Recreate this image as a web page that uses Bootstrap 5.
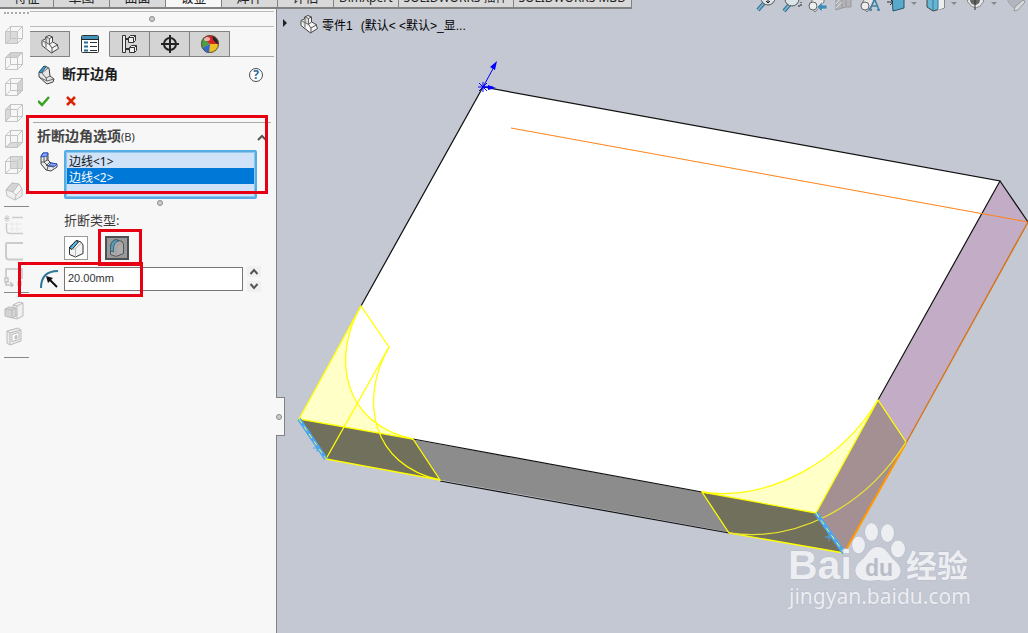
<!DOCTYPE html>
<html lang="zh-CN">
<head>
<meta charset="utf-8">
<meta name="viewport" content="width=device-width, initial-scale=1">
<title>SOLIDWORKS - 断开边角</title>
<link rel="stylesheet" href="https://cdn.jsdelivr.net/npm/bootstrap@5.3.0/dist/css/bootstrap.min.css">
<style>
:root{--panel:#f7f7f7;--view:#c4c8d3;--edge:#828282;--rule:#a8a8a8;--mark:#e60012}
body{font-family:"Noto Sans","Noto Sans CJK SC",sans-serif;font-size:13px;line-height:16px;color:#3c3c3c;background:var(--view)}
button{font:inherit}
svg{display:block;flex:none}
.ribbon{height:9px}
.ribbon-tab{height:24px;width:56px;line-height:18px;padding:2px 0 0;border:0;border-right:1px solid var(--edge);border-bottom:2px solid var(--edge);background:#d9d9d9;color:#222;white-space:nowrap}
.ribbon-tab:first-child{width:54px}
.ribbon-tab.active{background:var(--panel)}
.ribbon-tab.wide{width:auto;padding:4px 5px 0;font-size:12px}
.side{width:30px;background:var(--panel)}
.side button,.plain{border:0;background:none;padding:0}
.side-grip{width:25px;border-top:2px dotted #aaa;margin-top:3px;margin-bottom:11px}
.side-rule{width:25px;border-top:1px solid #888;margin-top:5px;margin-bottom:8px}
.side-rule:last-child{margin-top:10px}
.side-tools{gap:6px}
.panel{width:246px;background:var(--panel)}
.grip{height:16px;margin-top:2px;border-top:1px solid #bbb;border-bottom:1px solid #bbb;margin-right:2px}
.knob{width:6px;height:6px;border:1px solid #8b8b8b;border-radius:50%;background:#ccc}
.tabs{margin:4px 2px 0 0;border-bottom:1px solid var(--rule)}
.tabs button{width:40px;height:26px;margin-bottom:-1px;border:1px solid var(--edge);border-left-width:0;background:#d4d4d4;padding:0}
.tabs button.active{background:var(--panel);border-bottom-color:var(--panel);border-top-color:var(--panel)}
.head{font-size:14px;line-height:18px;color:#1d1d1d;margin-left:6px;padding-bottom:2px}
.confirm{gap:16px;margin-top:10px}
.group{margin:15px 5px 0 3px;border-top:1px solid var(--rule)}
.group h2{font-size:14px;line-height:18px;padding-bottom:2px;color:#444}
.group h2 small{font-size:11px;font-weight:400;color:#333}
.picked{margin-top:2px;padding-left:7px}
.edges{width:193px;height:49px;border:2px solid #56ade4;padding:0 1px 1px;background:#cfe2f7;color:#111;font-size:12px;overflow:hidden;outline:1px solid #8dc7ee;outline-offset:-3px;scrollbar-width:none}
.edges::-webkit-scrollbar{display:none}
.edges option{height:16px;min-height:16px;line-height:13px;padding:0 2px}
.edges option:checked{background:#0078d7 linear-gradient(#0078d7,#0078d7);color:#fff !important}
.splitter{padding:1px 0 0 15px}
.type{padding:6px 0 0 34px}
.kinds{gap:17px;margin-top:8px}
.kind{width:24px;height:24px;border:1px solid #999;background:#fff;padding:1px}
.kind.active{background:#999;border:2px solid #4b5055;padding:0}
.size-row{gap:4px;margin-top:6px}
.radius{width:179px;height:24px;border:1px solid #767676;border-radius:0;padding:0 3px 3px;font:11px "Liberation Sans",sans-serif;color:#333}
.spin button{width:14px;height:11px;background:#f0f0f0}
.handle{left:-1px;top:388px;width:9px;height:39px;border:1px solid var(--edge);border-left:0;background:var(--panel)}
.stage{border-left:1px solid var(--edge);min-width:0}
.tree{font-family:"Liberation Sans","Noto Sans CJK SC",sans-serif;font-size:12px;color:#000;padding:5px 0 0 6px}
.tree-icon{margin-left:10px;margin-right:3px}
.hud{right:2px;top:-18px}
.hud button{width:26px}
.hud .has-menu{width:40px}
.hud button:last-child{width:20px}
.callout-box{border:3px solid var(--mark);pointer-events:none}
.box-edges{left:26px;top:115px;width:242px;height:79px}
.box-kind{left:98px;top:229px;width:44px;height:37px}
.box-radius{left:18px;top:262px;width:125px;height:35px}
.wm{fill:#eceef2;paint-order:stroke;stroke:#b6bbc7;stroke-width:1}
</style>
<script src="https://cdn.jsdelivr.net/npm/bootstrap@5.3.0/dist/js/bootstrap.bundle.min.js"></script>
</head>
<body class="position-relative vh-100 overflow-hidden d-flex flex-column">
<svg width="0" height="0" class="position-absolute" aria-hidden="true">
  <defs>
    <g id="cube" fill="none" stroke="#c4c4c4"><path d="M1.500 6.500h12v12h-12zM6.500 1.500h12v12h-12zM1.500 6.500l5-5M13.500 6.500l5-5M13.500 18.500l5-5M1.500 18.500l5-5"/></g>
    <g id="part" stroke-linejoin="round"><path d="M1 5.500 4.500 4V2L8 .500l3.500 1.500v5l2 1L16 9.500l1.500 4-7 4.500L1 10.500z" fill="#f4f4f4" stroke="#444"/><path d="m5 2 3.500 1.500v6L5 7.500zM1 5.500l4 2v5" fill="#dcdcdc" stroke="#666"/><path d="m8.500 3.500 3-1.500M8.500 9.500l3-2.500M8.500 9.500 11 13v5m0-5 6-3.500" fill="none" stroke="#555"/></g>
  </defs>
</svg>

<nav class="ribbon d-flex align-items-end overflow-hidden flex-shrink-0" aria-label="命令选项卡">
  <button class="ribbon-tab">特征</button><button class="ribbon-tab">草图</button><button class="ribbon-tab">曲面</button><button class="ribbon-tab active">钣金</button><button class="ribbon-tab">焊件</button><button class="ribbon-tab">评估</button><button class="ribbon-tab wide">DimXpert</button><button class="ribbon-tab wide">SOLIDWORKS 插件</button><button class="ribbon-tab wide">SOLIDWORKS MBD</button>
</nav>

<main class="d-flex flex-grow-1">
  <aside class="side d-flex flex-column align-items-start flex-shrink-0" aria-label="视图工具">
    <div class="side-grip ms-1"></div>
    <div class="side-tools d-flex flex-column ms-1">
      <button aria-label="前视"><svg width="20" height="20"><path d="M1.500 6.500h12v12h-12z" fill="#dadada"/><use href="#cube"/></svg></button>
      <button aria-label="上视"><svg width="20" height="20"><path d="m1.500 6.500 5-5h12l-5 5z" fill="#d2d2d2"/><use href="#cube"/></svg></button>
      <button aria-label="右视"><svg width="20" height="20"><path d="m13.500 6.500 5-5v12l-5 5z" fill="#d2d2d2"/><use href="#cube"/></svg></button>
      <button aria-label="左视"><svg width="20" height="20"><path d="m1.500 6.500 5-5v12l-5 5z" fill="#dadada"/><use href="#cube"/></svg></button>
      <button aria-label="下视"><svg width="20" height="20"><path d="m1.500 18.500 5-5h12l-5 5z" fill="#dadada"/><use href="#cube"/></svg></button>
      <button aria-label="后视"><svg width="20" height="20"><path d="M6.500 1.500h12v12h-12z" fill="#dadada"/><use href="#cube"/></svg></button>
      <button aria-label="等轴测"><svg width="20" height="20" stroke="#c0c0c0" stroke-linejoin="round"><path d="m2 9 6-7 7 1 3 5v7l-7 4-8-4z" fill="#efefef"/><path d="m2 9 6-7 7 1-6 8z" fill="#d5d5d5"/><path d="m9 11 6-8 3 5-6 6z" fill="#f5f5f5"/><path d="m9 11 3 3-1 5" fill="none"/></svg></button>
    </div>
    <div class="side-rule ms-1"></div>
    <div class="side-tools d-flex flex-column ms-1">
      <button aria-label="草图圆角"><svg width="20" height="20" fill="none" stroke="#ccc"><path d="M8 2.500h11M2.500 8v7q0 3.500 4 3.500H19" stroke-width="1.500"/><path d="M3 0v7M0 3.500h6M1 1l4 5M5 1 1 6"/><path d="M8 6v11M13 6v11M5 9h13M5 14h13" stroke-width=".3"/></svg></button>
      <button aria-label="圆角矩形"><svg width="20" height="20" fill="none" stroke="#ccc" stroke-width="2"><path d="M19 2H3Q2 2 2 3v12q0 3.500 3.500 3.500H19"/></svg></button>
      <button aria-label="等距实体"><svg width="20" height="20" fill="none" stroke="#c4c4c4" stroke-width="1.500"><path d="M2 11V2h16v10M1 11h3v4H1zM14 15h3v3h-3zM2 15v3h7m-3-3 3 3-3 3"/></svg></button>
    </div>
    <div class="side-rule ms-1"></div>
    <div class="side-tools d-flex flex-column ms-1">
      <button aria-label="拉伸"><svg width="20" height="20" fill="#f0f0f0" stroke="#bbb" stroke-linejoin="round"><path d="m9 4 6-3 4 1v13l-6 3-4-1z"/><path d="m9 4 4 1 6-3M13 5v12" fill="none"/><path d="m1 8 4-2 7 1v8l-4 2-7-2z" fill="#d4d4d4"/><path d="m1 8 7 1 4-2M8 9v8" fill="none"/></svg></button>
      <button aria-label="抽壳"><svg width="20" height="20" fill="#ececec" stroke="#bbb" stroke-linejoin="round"><path d="m3 4 11-3 3 2v11L6 18l-3-2z"/><path d="m3 4 3 2 11-3M6 6v12" fill="none"/><path d="m8 7.500 7-2v7l-7 2z" fill="#fff"/><path d="m11 9 2-.500v3l-2 .500z" fill="#ccc"/></svg></button>
    </div>
    <div class="side-rule ms-1"></div>
  </aside>

  <section class="panel flex-shrink-0" aria-label="属性管理器">
    <div class="grip d-flex align-items-center justify-content-center"><span class="knob"></span></div>
    <div class="tabs d-flex" role="tablist">
      <button role="tab" aria-label="设计树"><svg class="m-auto" width="20" height="20"><use href="#part" x="1" y="1"/></svg></button>
      <button role="tab" class="active" aria-label="属性"><svg class="m-auto" width="20" height="20"><rect x="1.500" y="1.500" width="17" height="17" rx="1" fill="#fff" stroke="#333"/><path d="M2 2h16v3.500H2z" fill="#3f93bd"/><path d="M1 5.500h18" stroke="#222"/><path d="M4 8.500h4m-4 4h4m-4 4h4" stroke="#236d98" stroke-width="2"/><path d="M10 8.500h7m-7 4h7m-7 4h7" stroke="#333"/></svg></button>
      <button role="tab" aria-label="配置"><svg class="m-auto" width="20" height="20" fill="#eee" stroke="#333"><path d="M2.500 1.500h3v17h-3z"/><path d="M6 5h3M6 15h3" stroke-width="2"/><path d="m8.500 3.500 2-2h5v5l-2 2h-5zM9.500 13.500l2-2h5v5l-2 2h-5z"/><path d="M8.500 3.500h5v5m0-5 2-2M9.500 13.500h5v5m0-5 2-2" fill="none"/></svg></button>
      <button role="tab" aria-label="尺寸专家"><svg class="m-auto" width="20" height="20" fill="none" stroke="#222" stroke-width="2"><circle cx="10" cy="10" r="6"/><path d="M10 1v18M1 10h18"/></svg></button>
      <button role="tab" aria-label="外观"><svg class="m-auto" width="20" height="20"><circle cx="10" cy="10" r="9" fill="#eebf20"/><path d="M10 10 4 3A9 9 0 0 0 2 14z" fill="#4c9e3e"/><path d="M10 10 3 4Q9-1 16 3l3 7z" fill="#d82424"/><path d="m10 10-8 4q3 5 7 5z" fill="#3268cc"/><path d="M12 2q7 1 7 9-6-3-7-9z" fill="#222"/><ellipse cx="7" cy="5" rx="3" ry="2" fill="#fff" opacity=".65"/><circle cx="10" cy="10" r="8.500" fill="none" stroke="#555"/></svg></button>
    </div>

    <div class="d-flex align-items-center ps-2 pt-1 mt-1">
      <svg width="18" height="20"><path d="m1 7 6-6 4 2 1 8 4 3-1 3-6 2-8-7z" fill="#e6e6e6" stroke="#444" stroke-linejoin="round"/><path d="m1 7 5-6 2 1-5 6z" fill="#3f9bc9" stroke="#1c5878"/><path d="m1 12 8 4 7-2M4 8l4 5 1 3m-1-3 4-2M4 8l6-5" fill="none" stroke="#666"/></svg>
      <h1 class="head fw-bold mb-0">断开边角</h1>
      <button class="plain ms-auto me-2 pe-1" aria-label="帮助"><svg width="16" height="16"><circle cx="8" cy="8" r="6.500" fill="#fff" stroke="#454b52"/><text x="8" y="12" text-anchor="middle" font-size="12" font-weight="700" fill="#286f9a">?</text></svg></button>
    </div>
    <div class="confirm d-flex ps-2">
      <button class="plain" aria-label="确定"><svg width="12" height="12"><path d="m0 6 4 4 7-8" fill="none" stroke="#3ba321" stroke-width="2.500"/></svg></button>
      <button class="plain" aria-label="取消"><svg width="12" height="12"><path d="m1 2 8 8m0-8-8 8" stroke="#dc2200" stroke-width="2.500"/></svg></button>
    </div>

    <div class="group">
      <div class="d-flex align-items-center ps-1 pt-1">
        <h2 class="fw-bold mb-0">折断边角选项<small>(B)</small></h2>
        <button class="plain ms-auto me-1" aria-label="折叠"><svg width="10" height="10"><path d="m1 7 4-4 4 4" fill="none" stroke="#555" stroke-width="2"/></svg></button>
      </div>
      <div class="picked d-flex">
        <svg class="me-1" width="20" height="24"><path d="m1 6 2-3h5v7l3 3 6 1v3l-6 4-5-1-5-6z" fill="#e8e8e8" stroke="#444" stroke-linejoin="round"/><path d="m1 7 2-4h5l-1 3zM8 16l3-3 6 1-3 3z" fill="#8ba9ff" stroke="#2851d8"/><path d="M4 7v5l4 4-1 4M7 6v5m-6 1 3 0m4 4h6M4 12l3-2m-1 6 4-4" fill="none" stroke="#555"/></svg>
        <select class="edges" multiple size="3" aria-label="边线"><option>边线&lt;1&gt;</option><option selected>边线&lt;2&gt;</option></select>
      </div>
      <div class="splitter d-flex justify-content-center"><span class="knob"></span></div>
    </div>
    <div class="type">
      <span id="kind-label">折断类型:</span>
      <div class="kinds d-flex" role="group" aria-labelledby="kind-label">
        <button class="kind" aria-label="倒角"><svg width="20" height="20" stroke-linejoin="round"><path d="M3.500 9 11 2.500l4 1.500 2 3v8.500L9.500 19l-6-2.500z" fill="#f4f4f4" stroke="#333"/><path d="M3.500 10 10 2.500l2.500 1.500L6 11.500z" fill="#55bce8" stroke="#222"/><path d="m6 11.500 3.500-1V19m0-8.500 6-5.500" fill="none" stroke="#bbb"/></svg></button>
        <button class="kind active" aria-label="圆角" aria-pressed="true"><svg width="20" height="20" stroke-linejoin="round"><path d="M3.500 10Q3.500 3 9 1.500l6 2 1.500 2.500v9.500L9 18.500l-5.500-2z" fill="#adadad" stroke="#555"/><path d="M3.500 13V9Q4 3 9 1.500l3 1.500Q7 4 6.500 10v4z" fill="#5c9cb8" stroke="#3b6478"/><path d="M9 18.500V10q1-4 6-5" fill="none" stroke="#999"/></svg></button>
      </div>
    </div>
    <div class="size-row d-flex align-items-center ps-2">
      <label for="radius" aria-label="半径"><svg width="22" height="20"><path d="M3 19Q3 2 20 2" fill="none" stroke="#2e7798" stroke-width="2"/><path d="m19 18-9-9" stroke="#111" stroke-width="2"/><path d="m8 7 7 2-5 5z" fill="#111"/></svg></label>
      <input id="radius" class="radius" value="20.00mm">
      <div class="spin d-flex flex-column gap-1">
        <button class="plain" aria-label="增加"><svg class="m-auto" width="10" height="9"><path d="m1.500 7 3.500-4 3.500 4" fill="none" stroke="#555" stroke-width="2"/></svg></button>
        <button class="plain" aria-label="减少"><svg class="m-auto" width="10" height="9"><path d="m1.500 2 3.500 4 3.500-4" fill="none" stroke="#555" stroke-width="2"/></svg></button>
      </div>
    </div>
  </section>

  <section class="stage position-relative flex-grow-1" aria-label="图形区域">
    <svg class="position-absolute top-0 start-0 w-100 h-100" viewBox="277 9 751 624" preserveAspectRatio="xMinYMin slice">
      <path d="M483 87 1000 181 816 513 299 419z" fill="#fff"/>
      <path d="M299 419 816 513 844 553 326 459z" fill="#8c8c8c"/>
      <path d="m1000 181 28 40-184 332-28-40z" fill="#c3adc6"/>
      <path d="M361 306C331 358 343 424 413 439L299 419z" fill="#ffffc8"/>
      <path d="M299 419 413 439 440 480 326 459z" fill="#70705c"/>
      <path d="M702 492C771 502 843 459 878 400L816 512z" fill="#ffffc8"/>
      <path d="m702 492 114 21 28 40-115-20z" fill="#70705c"/>
      <path d="m878 400 28 42-62 111-28-40z" fill="#a48f92"/>
      <path d="M361 306 483 87l517 94-122 219M1000 181l28 41M413 439l289 53M440 481l289 52" fill="none" stroke="#111" stroke-width="1.200"/>
      <path d="m511 128 517 94" stroke="#ff8317" fill="none"/>
      <path d="M1028 222 906 443" stroke="#d27419" stroke-width="1.500"/><path d="m906 443-62 110" stroke="#ff9700" stroke-width="2"/>
      <g fill="none" stroke="#ff0" stroke-width="1.300">
        <path d="M299 419 361 306l28 41-63 112 114 21-27-41z"/>
        <path d="M361 306C331 358 343 424 413 439M389 347C359 399 371 465 440 480"/>
        <path d="M816 513 702 492l27 41 115 20"/>
        <path d="M816 513 878 400l28 42"/>
        <path d="M702 492C771 502 843 459 878 400"/>
        <path d="M729 533C797 543 866 506 906 442" stroke="#ebe52e"/>
      </g>
      <path d="m299 419 27 40M816 513l28 40" stroke="#4aa5f5" stroke-width="4"/>
      <path d="m299 419 27 40M816 513l28 40" stroke="#ef4" stroke-dasharray="5 4"/>
      <path d="M313 448h7m-3-3v7M825 537h7m-3-3v7" stroke="#4aa5f5"/>
      <g stroke="#00f" fill="#00f"><path d="m483 87 12-22M483 87h10M479 83l8 8m-8 0 8-8M483 82v10M478 87h10"/><path d="m497 61-7 6 5 3zM496 88l-8-3v5z" stroke="none"/></g>
      <g class="wm">
        <text x="788" y="579" font-family="Liberation Sans,sans-serif" font-size="41" font-weight="700">Bai</text>
        <ellipse cx="858.500" cy="545" rx="6.500" ry="8.500"/><ellipse cx="871.500" cy="532" rx="6.500" ry="9"/><ellipse cx="887.500" cy="533" rx="6.500" ry="9"/><ellipse cx="898" cy="549" rx="7" ry="8.500"/>
        <path d="M878 547c8 0 10 7 15 12 6 5 9 10 7 15-3 8-13 7-22 6-9 1-18 2-22-6-2-6 1-10 7-15 5-5 7-12 15-12z"/>
        <text x="906" y="577" font-family="Noto Sans CJK SC,sans-serif" font-size="31" font-weight="700">经验</text>
        <text x="789" y="604" font-family="Noto Sans,sans-serif" font-size="21">jingyan.baidu.com</text>
      </g>
      <text x="879" y="576" text-anchor="middle" font-family="Liberation Sans,sans-serif" font-size="23" font-weight="700" fill="#b9bdc8">du</text>
    </svg>
    <div class="handle position-absolute d-flex align-items-center"><span class="knob"></span></div>
    <div class="tree position-relative d-flex align-items-center">
      <svg width="6" height="10"><path d="m0 0 4 4-4 4z" fill="#222"/></svg>
      <svg width="20" height="20" class="tree-icon"><use href="#part" x="1" y="1"/></svg>
      <span class="pt-1">零件1</span><span class="ms-2 pt-1">(默认&lt; &lt;默认&gt;_显...</span>
    </div>
    <div class="hud position-absolute d-flex align-items-start" role="toolbar" aria-label="视图">
      <button class="plain" aria-label="整屏显示"><svg width="20" height="22"><path d="m8 12-6 7" stroke="#33627d" stroke-width="4"/><path d="m8 12-6 7" stroke="#69b4d5" stroke-width="2"/><circle cx="12" cy="7" r="7" fill="#dae4e9" stroke="#555"/><path d="M12 1v11m-2-2 2 2 2-2" fill="none" stroke="#222"/></svg></button>
      <button class="plain" aria-label="局部放大"><svg width="20" height="22"><path d="m8 13-6 7" stroke="#33627d" stroke-width="4"/><path d="m8 13-6 7" stroke="#69b4d5" stroke-width="2"/><circle cx="10" cy="8" r="7" fill="#dae4e9" stroke="#555"/><path d="M16 15h3v-4" fill="none" stroke="#222" stroke-dasharray="2 1"/></svg></button>
      <button class="plain" aria-label="上一视图"><svg width="20" height="22"><path d="m1 14 8-12h7v9l-9 10z" fill="#e6e6e6" stroke="#777"/><circle cx="5" cy="15" r="4" fill="#eee" stroke="#666"/><path d="m9 16 5-5v3h5v4h-5v3z" fill="#438bb0" stroke="#dce4e8" stroke-width=".5"/></svg></button>
      <button class="plain" aria-label="剖面"><svg width="20" height="22"><path d="M2 4h6v13l-6 2zM8 4l4 2v10l-4 1m4-11 5-3v13h-5" fill="#b2b4ba" stroke="#999"/><path d="m2 13 5-6m-5 10 6-6" stroke="#ddd"/></svg></button>
      <button class="plain" aria-label="动态注解"><svg width="20" height="22"><path d="m1 14 7-12h6v9l-7 10z" fill="#e6e6e6" stroke="#777"/><circle cx="5" cy="15" r="4" fill="#eee" stroke="#666"/><path d="m10 19 4-10h1l4 10m-7-4h5M9 19h3m5 0h3" fill="none" stroke="#397fa7" stroke-width="1.500"/></svg></button>
      <button class="plain has-menu" aria-label="视图定向"><svg width="31" height="22"><path d="m6 6 12-2v13L7 20z" fill="#57aacc" stroke="#285569"/><path d="M1 11h6m-3-3 3 3-3 3" fill="none" stroke="#333"/><path d="M25 11h6l-3 3z" fill="#888"/></svg></button>
      <button class="plain has-menu" aria-label="显示样式"><svg width="31" height="22"><path d="M1 4h17v13L7 20l-6-4z" fill="#67b6d2" stroke="#444"/><path d="M12 4h6v13l-6 2z" fill="#eee"/><path d="M7 4v16m5-16v14" stroke="#327b9a"/><path d="M25 11h6l-3 3z" fill="#888"/></svg></button>
      <button class="plain has-menu" aria-label="隐藏显示"><svg width="31" height="22"><path d="M1 10q9-10 17 0-8 14-17 0z" fill="#e8e8e8" stroke="#888"/><circle cx="9" cy="9" r="5" fill="#666"/><path d="M9 1v18" stroke="#333"/><path d="M25 11h6l-3 3z" fill="#888"/></svg></button>
      <button class="plain" aria-label="编辑外观"><svg width="20" height="22"><path d="M1 6q0 7 9 12 9-5 9-12z" fill="#b2b5bd" stroke="#a4a7af"/><path d="m8 20 1-4 8-7 2 2-7 8z" fill="#d7d9dd" stroke="#999"/></svg></button>
    </div>
  </section>
</main>

<div class="callout-box box-edges position-absolute"></div>
<div class="callout-box box-kind position-absolute"></div>
<div class="callout-box box-radius position-absolute"></div>
</body>
</html>
